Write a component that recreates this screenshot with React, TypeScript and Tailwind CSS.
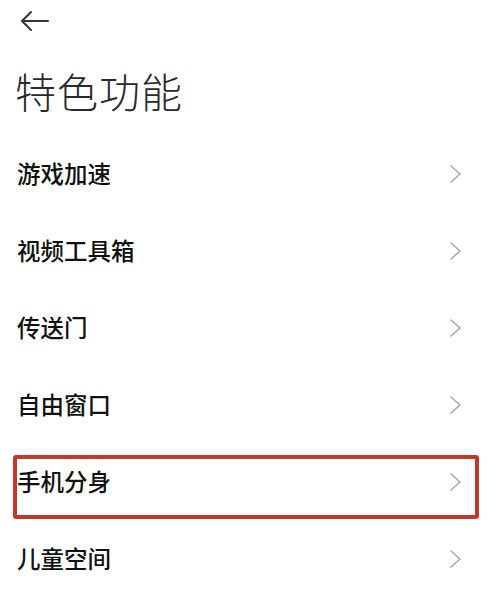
const ITEMS = ["游戏加速", "视频工具箱", "传送门", "自由窗口", "手机分身", "儿童空间"]

const HIGHLIGHT = "手机分身"

function Chevron() {
  return (
    <svg width="14" height="20" viewBox="0 0 14 20" fill="none" className="shrink-0">
      <path d="M2 2 L11 10 L2 18" stroke="#a8a8a8" strokeWidth="1.6" strokeLinecap="round" strokeLinejoin="round" />
    </svg>
  )
}

export default function App() {
  return (
    <div
      className="w-[500px] h-[603px] bg-white overflow-hidden text-[#111]"
      style={{ fontFamily: '"Noto Sans CJK SC", "Noto Sans", sans-serif' }}
    >
      {/* Top bar */}
      <div className="h-[42px] pl-[19px] pt-[10px]">
        <svg width="32" height="22" viewBox="0 0 32 22" fill="none">
          <path d="M3 11 H29 M12 2 L3 11 L12 20" stroke="#333" strokeWidth="2" strokeLinecap="round" strokeLinejoin="round" />
        </svg>
      </div>

      {/* Title */}
      <h1 className="pl-[15px] pt-[20px] h-[93px] text-[41px] leading-[56px] font-light text-[#2a2a2a] tracking-[1px]">
        特色功能
      </h1>

      {/* List */}
      <div className="flex flex-col">
        {ITEMS.map((item) => (
          <div key={item} className="relative h-[77px] flex items-center justify-between pl-[17px] pr-[37px]">
            <span className="text-[23.5px] font-medium leading-none">{item}</span>
            <Chevron />
            {item === HIGHLIGHT && (
              <div className="absolute left-[13px] right-[21px] top-[12px] bottom-[1px] border-[4px] border-[#c2392c] rounded-[3px]" />
            )}
          </div>
        ))}
      </div>
    </div>
  )
}
